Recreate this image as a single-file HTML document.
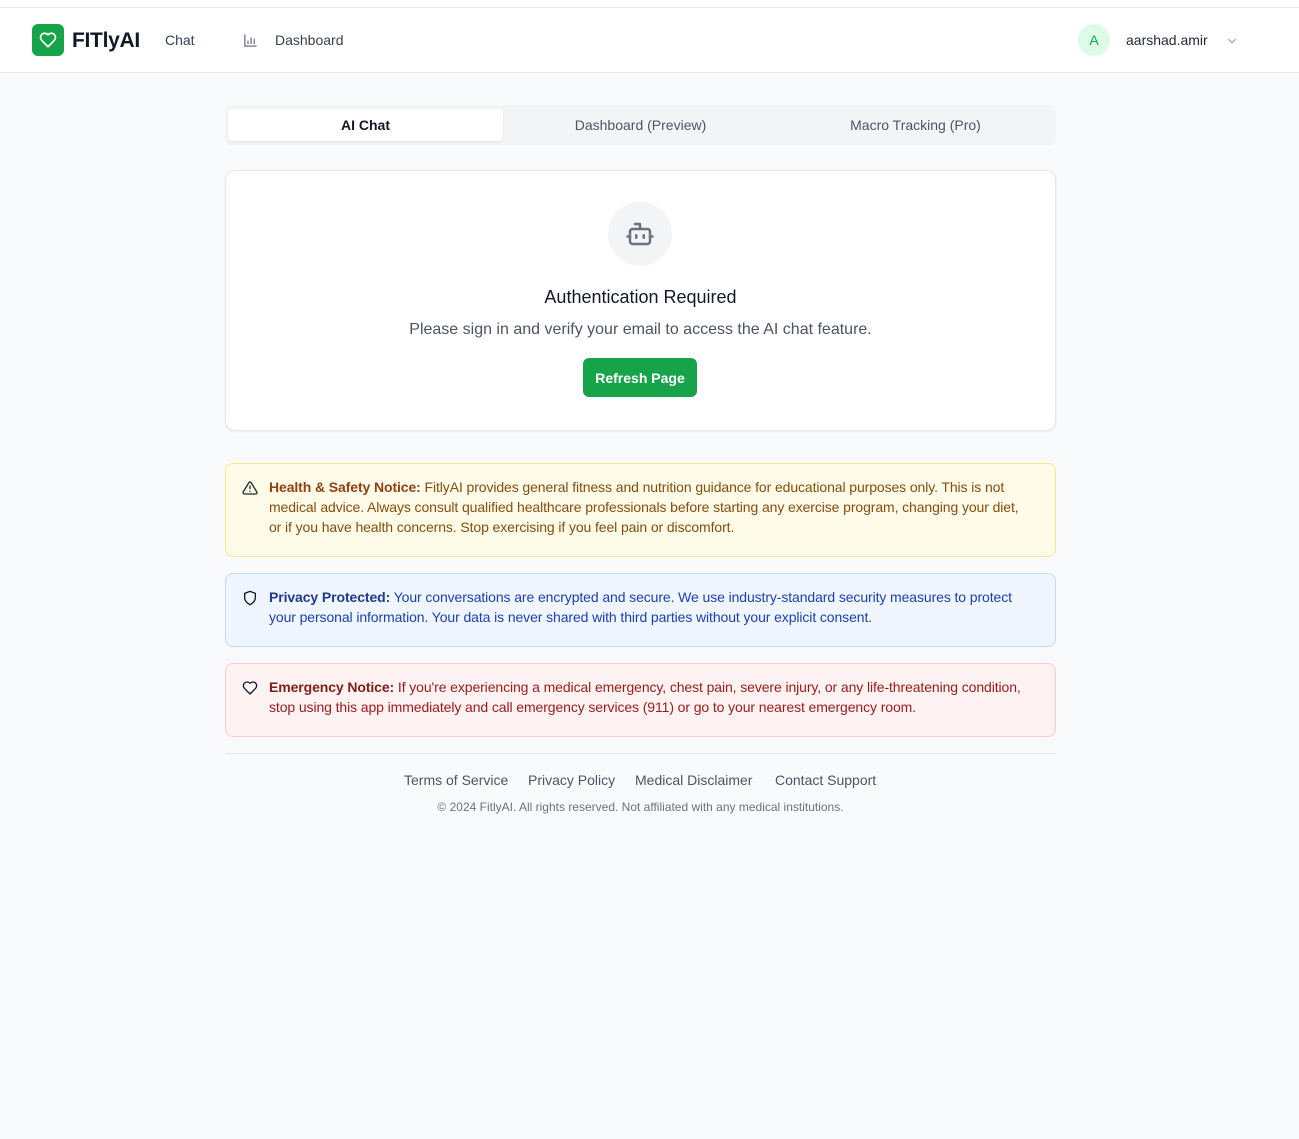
<!DOCTYPE html>
<html><head><meta charset="utf-8"><style>
*{box-sizing:border-box;margin:0;padding:0}
body{width:1299px;height:1139px;background:#f9fafb;font-family:"Liberation Sans",sans-serif;color:#111827;position:relative;overflow:hidden}
.topstrip{position:absolute;left:0;top:0;width:1299px;height:8px;background:#fff;border-bottom:1px solid #e5e7eb}
header{position:absolute;left:0;top:8px;width:1299px;height:65px;background:#fff;border-bottom:1px solid #e5e7eb}
.logo{position:absolute;left:32px;top:16px;width:32px;height:32px;background:#16a34a;border-radius:6px;display:flex;align-items:center;justify-content:center}
.brand{position:absolute;left:72px;top:21px;font-size:21px;font-weight:bold;color:#111827;letter-spacing:-0.3px}
.nav{position:absolute;top:24px;font-size:14px;color:#374151}
.avatar{position:absolute;left:1078px;top:16px;width:32px;height:32px;border-radius:50%;background:#dcfce7;color:#16a34a;font-size:14px;display:flex;align-items:center;justify-content:center}
.tabs{position:absolute;left:225px;top:105px;width:831px;height:40px;background:#f3f4f6;border-radius:6px}
.tab{position:absolute;top:4px;height:32px;width:275px;font-size:14px;color:#4b5563;display:flex;align-items:center;justify-content:center}
.tab.active{background:#fff;color:#111827;font-weight:bold;border-radius:4px;box-shadow:0 1px 2px rgba(0,0,0,.08)}
.card{position:absolute;left:225px;top:170px;width:831px;height:261px;background:#fff;border:1px solid #e5e7eb;border-radius:10px;box-shadow:0 1px 2px rgba(0,0,0,.05)}
.circ{position:absolute;left:382px;top:31px;width:64px;height:64px;border-radius:50%;background:#f3f4f6;display:flex;align-items:center;justify-content:center}
.h{position:absolute;left:0;width:100%;text-align:center}
.btn{position:absolute;left:357px;top:187px;width:114px;height:39px;background:#16a34a;border-radius:6px;color:#fff;font-size:14px;font-weight:bold;display:flex;align-items:center;justify-content:center}
.note{position:absolute;left:225px;width:831px;border-radius:8px;border:1px solid;padding:13px 28px 0 43px;font-size:14px;line-height:20px;letter-spacing:-0.1px}
.note svg{position:absolute;left:16px;top:16px}
.footline{position:absolute;left:225px;top:753px;width:831px;border-top:1px solid #e5e7eb}
.flinks{position:absolute;top:772px;font-size:14px;color:#4b5563}
</style></head><body>
<div class="topstrip"></div>
<header>
<div class="logo"><svg width="18" height="18" viewBox="0 0 24 24" fill="none" stroke="#fff" stroke-width="2.2" stroke-linecap="round" stroke-linejoin="round"><path d="M19 14c1.5-1.5 3-3.2 3-5.5A5.5 5.5 0 0 0 16.5 3c-1.8 0-3 .5-4.5 2-1.5-1.5-2.7-2-4.5-2A5.5 5.5 0 0 0 2 8.5c0 2.3 1.5 4 3 5.5l7 7Z"/></svg></div>
<div class="brand">FITlyAI</div>
<div class="nav" style="left:165px">Chat</div>
<svg style="position:absolute;left:243px;top:25px" width="15" height="15" viewBox="0 0 24 24" fill="none" stroke="#6b7280" stroke-width="2" stroke-linecap="round"><path d="M3 3v18h18M8 17v-4M13 17V8M18 17v-7"/></svg>
<div class="nav" style="left:275px">Dashboard</div>
<div class="avatar">A</div>
<div class="nav" style="left:1126px;color:#1f2937">aarshad.amir</div>
<svg style="position:absolute;left:1225px;top:26px" width="14" height="14" viewBox="0 0 24 24" fill="none" stroke="#9ca3af" stroke-width="2" stroke-linecap="round"><path d="m6 9 6 6 6-6"/></svg>
</header>
<div class="tabs">
<div class="tab active" style="left:3px">AI Chat</div>
<div class="tab" style="left:278px">Dashboard (Preview)</div>
<div class="tab" style="left:553px">Macro Tracking (Pro)</div>
</div>
<div class="card">
<div class="circ"><svg width="30" height="30" viewBox="0 0 24 24" fill="none" stroke="#6b7280" stroke-width="2" stroke-linecap="round" stroke-linejoin="round"><path d="M12 8V4H8"/><rect x="4" y="8" width="16" height="12" rx="2"/><path d="M2 14h2M20 14h2M15 13v2M9 13v2"/></svg></div>
<div class="h" style="top:116px;font-size:18px;color:#111827">Authentication Required</div>
<div class="h" style="top:150px;font-size:16px;color:#4b5563">Please sign in and verify your email to access the AI chat feature.</div>
<div class="btn">Refresh Page</div>
</div>
<div class="note" style="top:463px;height:94px;background:#fefce8;border-color:#fde68a;color:#854d0e">
<svg width="16" height="16" viewBox="0 0 24 24" fill="none" stroke="#1f2937" stroke-width="2" stroke-linecap="round" stroke-linejoin="round"><path d="M10.3 3.9 1.8 18a2 2 0 0 0 1.7 3h17a2 2 0 0 0 1.7-3L13.7 3.9a2 2 0 0 0-3.4 0zM12 9v4M12 17h.01"/></svg>
<b style="color:#92400e">Health &amp; Safety Notice:</b> FitlyAI provides general fitness and nutrition guidance for educational purposes only. This is not medical advice. Always consult qualified healthcare professionals before starting any exercise program, changing your diet, or if you have health concerns. Stop exercising if you feel pain or discomfort.</div>
<div class="note" style="top:573px;height:74px;background:#eff6ff;border-color:#bfdbfe;color:#1e40af">
<svg width="16" height="16" viewBox="0 0 24 24" fill="none" stroke="#111827" stroke-width="2" stroke-linecap="round" stroke-linejoin="round"><path d="M12 22s8-4 8-10V5l-8-3-8 3v7c0 6 8 10 8 10z"/></svg>
<b style="color:#1e3a8a">Privacy Protected:</b> Your conversations are encrypted and secure. We use industry-standard security measures to protect your personal information. Your data is never shared with third parties without your explicit consent.</div>
<div class="note" style="top:663px;height:74px;background:#fef2f2;border-color:#fecaca;color:#991b1b">
<svg width="16" height="16" viewBox="0 0 24 24" fill="none" stroke="#111827" stroke-width="2" stroke-linecap="round" stroke-linejoin="round"><path d="M19 14c1.5-1.5 3-3.2 3-5.5A5.5 5.5 0 0 0 16.5 3c-1.8 0-3 .5-4.5 2-1.5-1.5-2.7-2-4.5-2A5.5 5.5 0 0 0 2 8.5c0 2.3 1.5 4 3 5.5l7 7Z"/></svg>
<b style="color:#7f1d1d">Emergency Notice:</b> If you're experiencing a medical emergency, chest pain, severe injury, or any life-threatening condition, stop using this app immediately and call emergency services (911) or go to your nearest emergency room.</div>
<div class="footline"></div>
<div class="flinks" style="left:404px">Terms of Service</div>
<div class="flinks" style="left:528px">Privacy Policy</div>
<div class="flinks" style="left:635px">Medical Disclaimer</div>
<div class="flinks" style="left:775px">Contact Support</div>
<div style="position:absolute;left:0;width:1281px;top:800px;text-align:center;font-size:12px;color:#6b7280">© 2024 FitlyAI. All rights reserved. Not affiliated with any medical institutions.</div>
</body></html>
